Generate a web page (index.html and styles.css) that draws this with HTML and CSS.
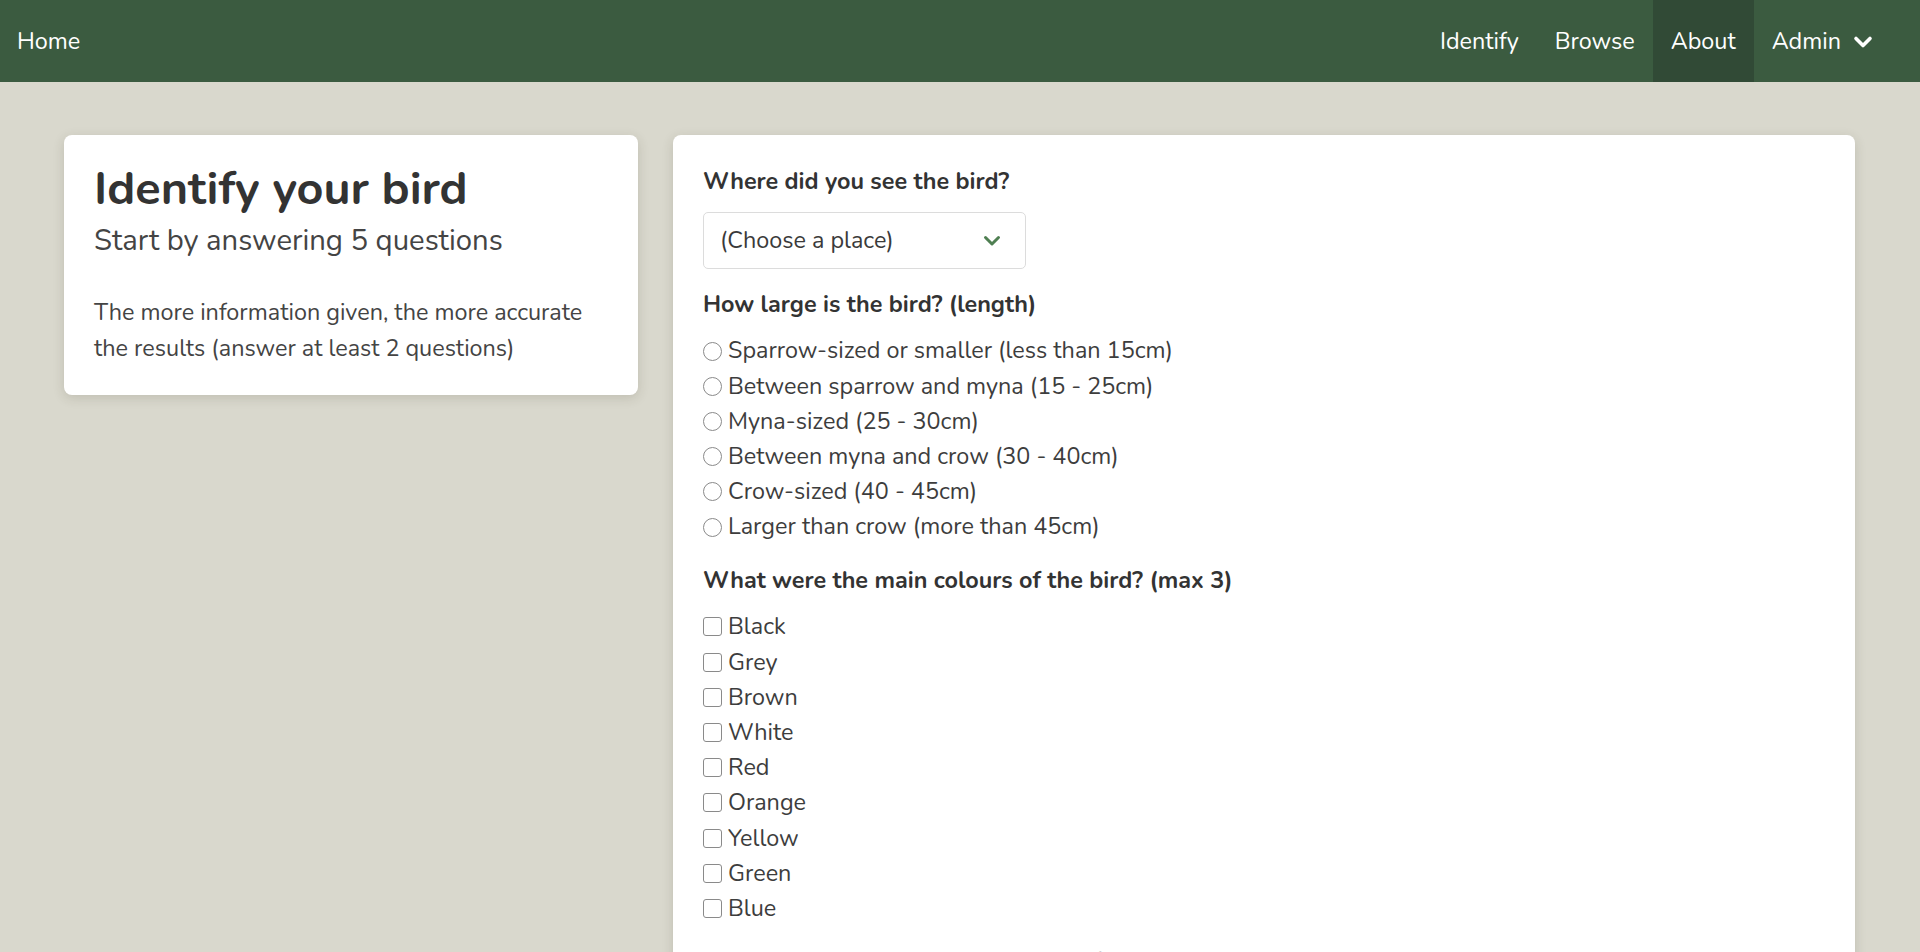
FILE: index.html
```html
<!DOCTYPE html>
<html lang="en">
<head>
<meta charset="utf-8">
<title>Identify your bird</title>
<link rel="stylesheet" href="styles.css">
</head>
<body>
<nav class="navbar">
  <a class="nav-brand" href="#">Home</a>
  <ul class="nav-links">
    <li><a class="nav-link" href="#">Identify</a></li>
    <li><a class="nav-link" href="#">Browse</a></li>
    <li><a class="nav-link active" href="#">About</a></li>
    <li><a class="nav-link dropdown" href="#">Admin
      <svg class="nav-caret" viewBox="0 0 20 14" width="20" height="14" aria-hidden="true"><path d="M3 3.5 L10 10.5 L17 3.5" fill="none" stroke="#fff" stroke-width="3.6" stroke-linecap="round" stroke-linejoin="round"/></svg>
    </a></li>
  </ul>
</nav>

<main class="page">
  <section class="card intro">
    <h1 class="intro-title">Identify your bird</h1>
    <p class="intro-sub">Start by answering 5 questions</p>
    <p class="intro-text">The more information given, the more accurate the results (answer at least 2 questions)</p>
  </section>

  <section class="card form-card">
    <form class="bird-form">
      <div class="q-group">
        <label class="q-label" for="place">Where did you see the bird?</label>
        <div class="select-wrap">
          <select id="place" class="select">
            <option>(Choose a place)</option>
          </select>
          <svg class="select-caret" viewBox="0 0 18 12" width="18" height="12" aria-hidden="true"><path d="M2.5 2.5 L9 9 L15.5 2.5" fill="none" stroke="#4f7f52" stroke-width="3" stroke-linecap="round" stroke-linejoin="round"/></svg>
        </div>
      </div>

      <div class="q-group">
        <div class="q-label">How large is the bird? (length)</div>
        <label class="opt"><input type="radio" name="size" class="radio">Sparrow-sized or smaller (less than 15cm)</label>
        <label class="opt"><input type="radio" name="size" class="radio">Between sparrow and myna (15 - 25cm)</label>
        <label class="opt"><input type="radio" name="size" class="radio">Myna-sized (25 - 30cm)</label>
        <label class="opt"><input type="radio" name="size" class="radio">Between myna and crow (30 - 40cm)</label>
        <label class="opt"><input type="radio" name="size" class="radio">Crow-sized (40 - 45cm)</label>
        <label class="opt"><input type="radio" name="size" class="radio">Larger than crow (more than 45cm)</label>
      </div>

      <div class="q-group">
        <div class="q-label">What were the main colours of the bird? (max 3)</div>
        <label class="opt"><input type="checkbox" class="check">Black</label>
        <label class="opt"><input type="checkbox" class="check">Grey</label>
        <label class="opt"><input type="checkbox" class="check">Brown</label>
        <label class="opt"><input type="checkbox" class="check">White</label>
        <label class="opt"><input type="checkbox" class="check">Red</label>
        <label class="opt"><input type="checkbox" class="check">Orange</label>
        <label class="opt"><input type="checkbox" class="check">Yellow</label>
        <label class="opt"><input type="checkbox" class="check">Green</label>
        <label class="opt"><input type="checkbox" class="check">Blue</label>
      </div>

      <div class="q-group">
        <div class="q-label">What was the bird doing when you first saw it?</div>
        <label class="opt"><input type="radio" name="doing" class="radio">Flying</label>
        <label class="opt"><input type="radio" name="doing" class="radio">Perched</label>
      </div>
    </form>
  </section>
</main>
</body>
</html>
```
FILE: styles.css
```css
* { box-sizing: border-box; }

html, body {
  margin: 0;
  padding: 0;
}

body {
  background: #d9d8cd;
  color: #3a3a3a;
  font-family: "Nunito", "Lato", "Open Sans", sans-serif;
  font-size: 23.4px;
  line-height: 35.2px;
}

.navbar {
  display: flex;
  align-items: stretch;
  justify-content: space-between;
  height: 82px;
  background: #3b5b40;
  padding: 0 29px 0 0;
}

.nav-brand {
  display: flex;
  align-items: center;
  padding: 2px 17px 0;
  color: #fff;
  text-decoration: none;
}

.nav-links {
  display: flex;
  align-items: stretch;
  list-style: none;
  margin: 0;
  padding: 0;
}

.nav-links li { display: flex; }

.nav-link {
  display: flex;
  align-items: center;
  padding: 2px 18px 0;
  color: #fff;
  text-decoration: none;
}

.nav-link.active { background: #314a36; }

.nav-caret { margin-left: 12px; }

.page {
  display: flex;
  align-items: flex-start;
  gap: 35px;
  padding: 53px 65px 0 64px;
}

.card {
  background: #fff;
  border-radius: 8px;
  box-shadow: 0 3px 12px rgba(60, 55, 40, 0.16);
}

.intro {
  width: 574px;
  flex: none;
  padding: 27.5px 30px 29px;
}

.intro-title {
  margin: 0;
  font-size: 46.8px;
  font-weight: 700;
  line-height: 1.15;
  color: #333;
}

.intro-sub {
  margin: 7px 0 0;
  font-size: 29.25px;
  line-height: 1.2;
  color: #444;
}

.intro-text {
  margin: 37px 0 0;
  color: #444;
}

.form-card {
  flex: 1;
  min-height: 900px;
  padding: 28.5px 30px;
}

.bird-form {
  display: flex;
  flex-direction: column;
  gap: 18px;
}

.q-group {
  display: flex;
  flex-direction: column;
  align-items: flex-start;
}

.q-label {
  display: block;
  font-weight: 700;
  color: #333;
  margin-bottom: 11.5px;
}

.select-wrap {
  position: relative;
  margin-top: 1.5px;
}

.select {
  appearance: none;
  -webkit-appearance: none;
  width: 323px;
  height: 57px;
  padding: 0 50px 0 16px;
  border: 1px solid #dcdcdc;
  border-radius: 5px;
  background: #fff;
  font: inherit;
  color: #3a3a3a;
}

.select-caret {
  position: absolute;
  right: 25px;
  top: 23px;
  pointer-events: none;
}

.opt {
  display: flex;
  align-items: center;
  color: #3d3d3d;
  cursor: pointer;
}

.radio, .check {
  appearance: none;
  -webkit-appearance: none;
  flex: none;
  width: 19px;
  height: 19px;
  margin: 0 6px 0 0;
  border: 1px solid #8a8a8a;
  background: #fff;
}

.radio { border-radius: 50%; }

.check { border-radius: 3px; }
```
